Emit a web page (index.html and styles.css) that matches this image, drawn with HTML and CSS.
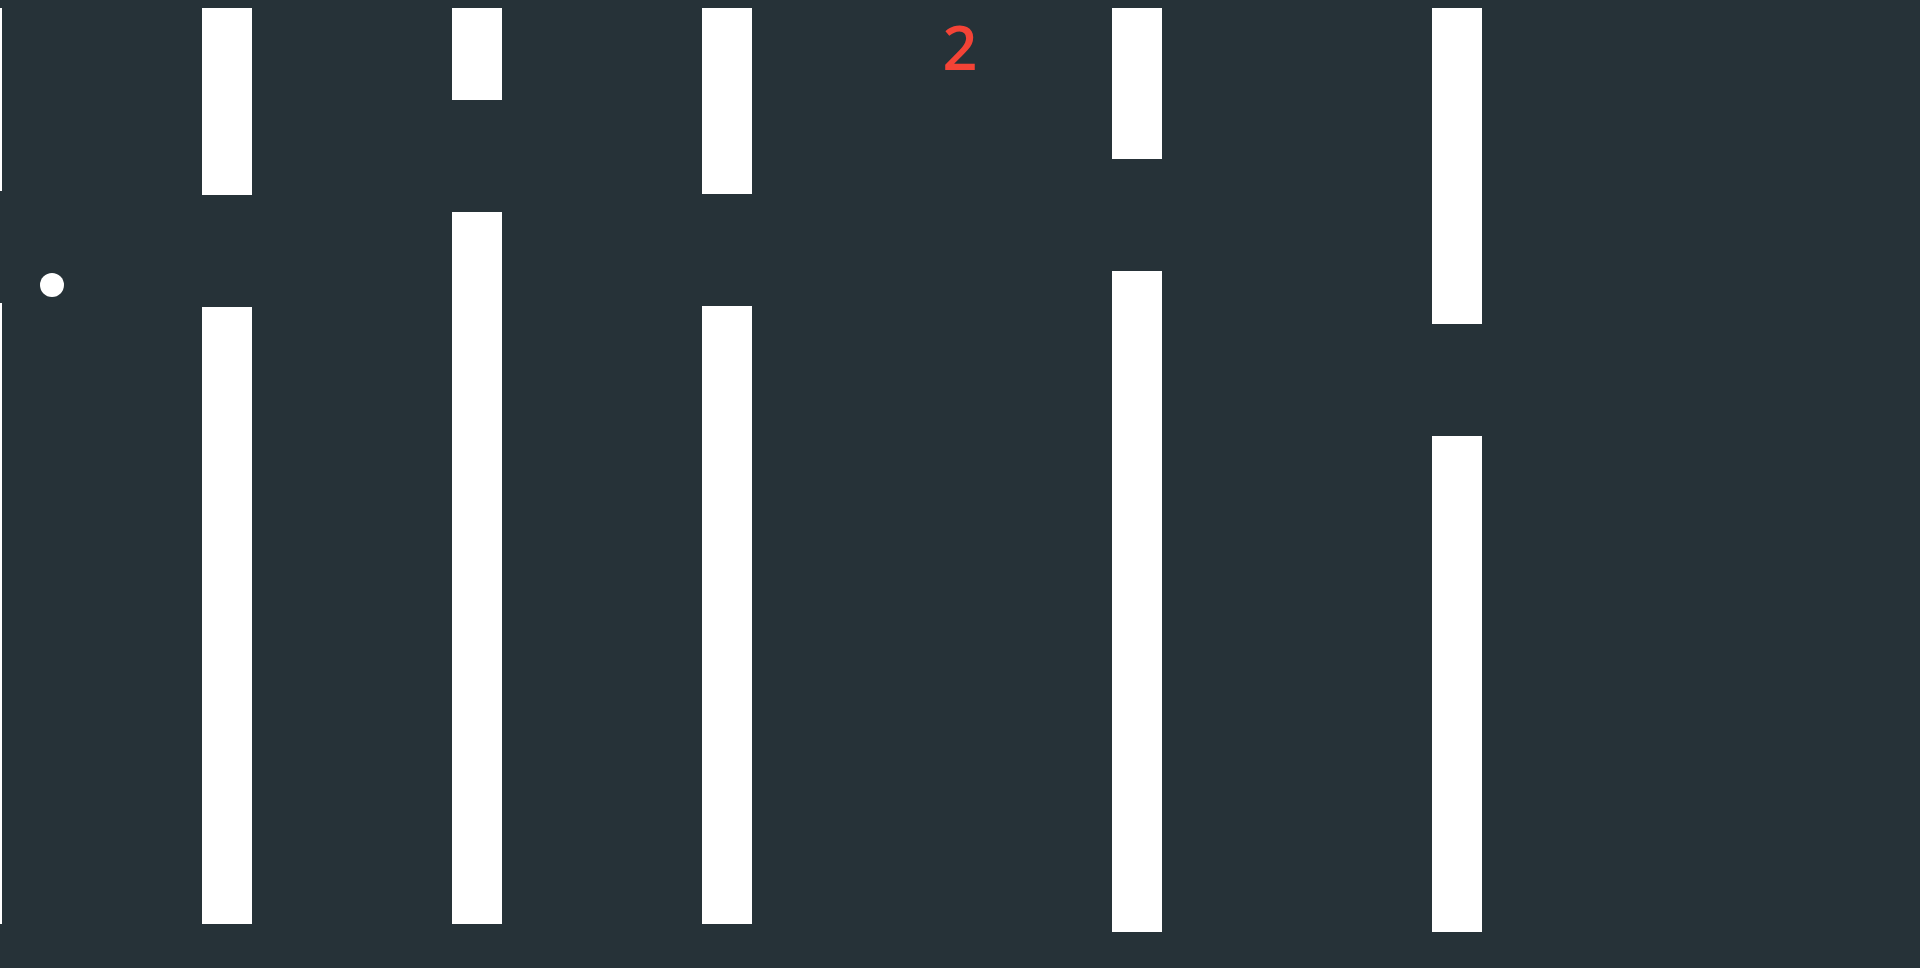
FILE: index.html
```html
<!DOCTYPE html>
<html lang="en">
<head>
<meta charset="utf-8">
<title>Flappy</title>
<link rel="stylesheet" href="styles.css">
</head>
<body>
<main class="stage">
  <div class="score">2</div>
  <div class="bird" style="left:40px;top:273px"></div>

  <!-- each pipe: upper segment, gap, lower segment -->
  <div class="pipe pipe-edge" style="left:0;height:916px">
    <div class="seg" style="height:183px"></div><div class="gap"></div><div class="seg grow"></div>
  </div>
  <div class="pipe" style="left:202px;height:916px">
    <div class="seg" style="height:187px"></div><div class="gap"></div><div class="seg grow"></div>
  </div>
  <div class="pipe" style="left:452px;height:916px">
    <div class="seg" style="height:92px"></div><div class="gap"></div><div class="seg grow"></div>
  </div>
  <div class="pipe" style="left:702px;height:916px">
    <div class="seg" style="height:186px"></div><div class="gap"></div><div class="seg grow"></div>
  </div>
  <div class="pipe" style="left:1112px;height:924px">
    <div class="seg" style="height:151px"></div><div class="gap"></div><div class="seg grow"></div>
  </div>
  <div class="pipe" style="left:1432px;height:924px">
    <div class="seg" style="height:316px"></div><div class="gap"></div><div class="seg grow"></div>
  </div>
</main>
</body>
</html>
```
FILE: styles.css
```css
html, body {
  margin: 0;
  height: 100%;
  background: #263238;
  overflow: hidden;
}

.stage {
  position: relative;
  width: 100%;
  height: 100%;
  background: #263238;
}

.score {
  position: absolute;
  top: 6px;
  left: 0;
  right: 0;
  text-align: center;
  font-family: "Open Sans", "Liberation Sans", sans-serif;
  font-size: 61px;
  font-weight: 600;
  line-height: 82px;
  color: #f44336;
}

.bird {
  position: absolute;
  width: 24px;
  height: 24px;
  border-radius: 50%;
  background: #ffffff;
}

.pipe {
  position: absolute;
  top: 8px;
  width: 50px;
  display: flex;
  flex-direction: column;
}

.pipe-edge {
  width: 2px;
}

.seg {
  background: #ffffff;
  flex: none;
}

.seg.grow {
  flex: 1;
}

.gap {
  height: 112px;
  flex: none;
}
```
